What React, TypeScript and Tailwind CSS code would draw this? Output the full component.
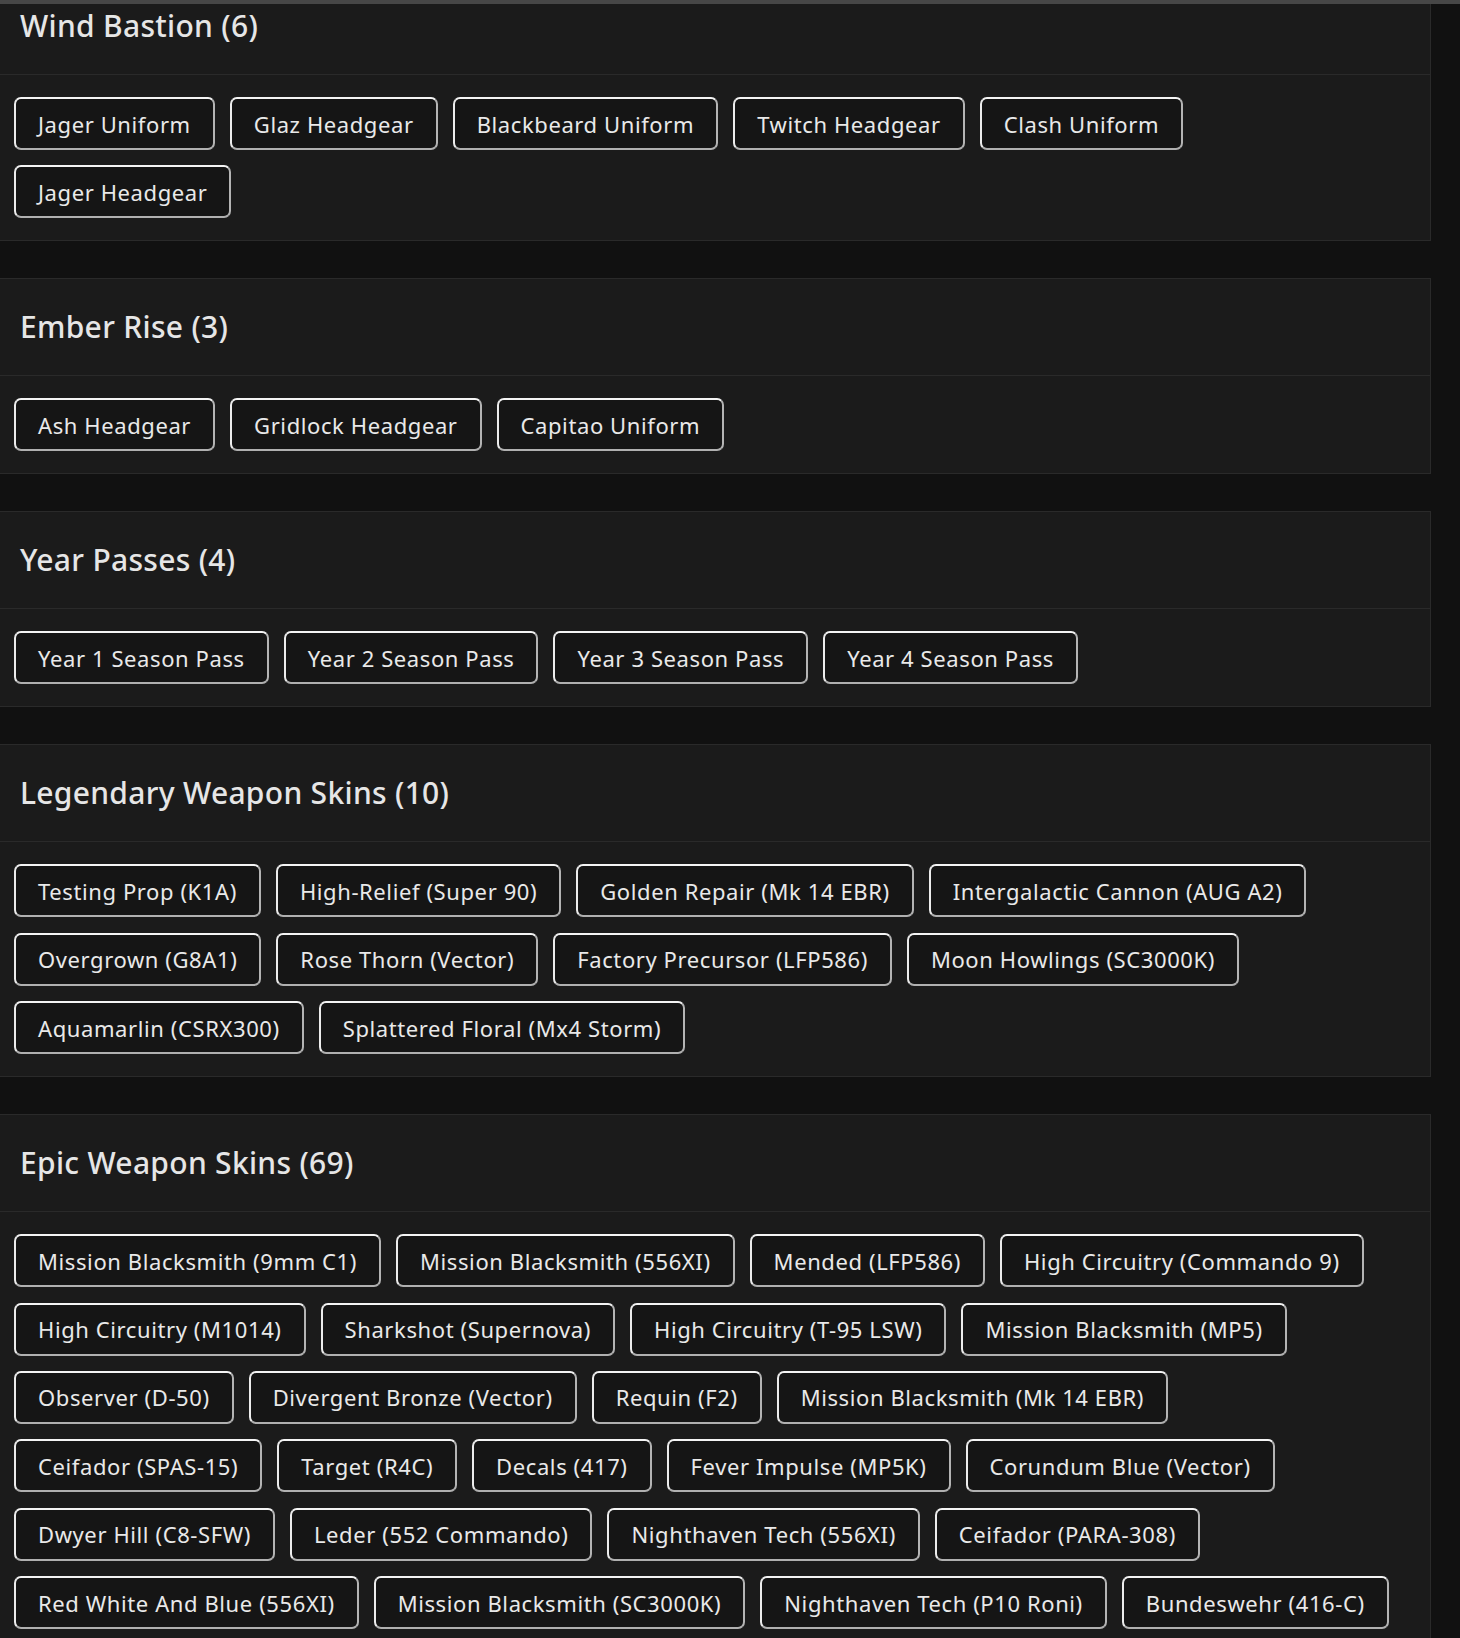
import React from "react";

type Section = { title: string; rows: string[][] };

const sections: Section[] = [
  {
    title: "Wind Bastion (6)",
    rows: [
      ["Jager Uniform", "Glaz Headgear", "Blackbeard Uniform", "Twitch Headgear", "Clash Uniform"],
      ["Jager Headgear"],
    ],
  },
  {
    title: "Ember Rise (3)",
    rows: [["Ash Headgear", "Gridlock Headgear", "Capitao Uniform"]],
  },
  {
    title: "Year Passes (4)",
    rows: [["Year 1 Season Pass", "Year 2 Season Pass", "Year 3 Season Pass", "Year 4 Season Pass"]],
  },
  {
    title: "Legendary Weapon Skins (10)",
    rows: [
      ["Testing Prop (K1A)", "High-Relief (Super 90)", "Golden Repair (Mk 14 EBR)", "Intergalactic Cannon (AUG A2)"],
      ["Overgrown (G8A1)", "Rose Thorn (Vector)", "Factory Precursor (LFP586)", "Moon Howlings (SC3000K)"],
      ["Aquamarlin (CSRX300)", "Splattered Floral (Mx4 Storm)"],
    ],
  },
  {
    title: "Epic Weapon Skins (69)",
    rows: [
      ["Mission Blacksmith (9mm C1)", "Mission Blacksmith (556XI)", "Mended (LFP586)", "High Circuitry (Commando 9)"],
      ["High Circuitry (M1014)", "Sharkshot (Supernova)", "High Circuitry (T-95 LSW)", "Mission Blacksmith (MP5)"],
      ["Observer (D-50)", "Divergent Bronze (Vector)", "Requin (F2)", "Mission Blacksmith (Mk 14 EBR)"],
      ["Ceifador (SPAS-15)", "Target (R4C)", "Decals (417)", "Fever Impulse (MP5K)", "Corundum Blue (Vector)"],
      ["Dwyer Hill (C8-SFW)", "Leder (552 Commando)", "Nighthaven Tech (556XI)", "Ceifador (PARA-308)"],
      ["Red White And Blue (556XI)", "Mission Blacksmith (SC3000K)", "Nighthaven Tech (P10 Roni)", "Bundeswehr (416-C)"],
    ],
  },
];

function ItemButton({ label }: { label: string }) {
  return (
    <button
      type="button"
      className="h-[53px] shrink-0 rounded-[7px] border-2 border-t-[#f4f4f4] border-l-[#ececec] border-r-[#b4b4b4] border-b-[#b0b0b0] bg-[#151515] px-[22px] text-[22px] leading-none tracking-[0.6px] text-[#e9e9e9] whitespace-nowrap"
    >
      {label}
    </button>
  );
}

function Panel({ section, first }: { section: Section; first?: boolean }) {
  return (
    <section
      className={`w-[1431px] shrink-0 border border-l-0 border-[#2a2a2a] bg-[#1b1b1b] ${first ? "-mt-[27px]" : ""}`}
    >
      <div className="flex h-[97px] items-center border-b border-[#2a2a2a] px-5">
        <h2 className="text-[30px] font-medium leading-none tracking-[0.3px] text-[#e6e6e6]">{section.title}</h2>
      </div>
      <div className="flex flex-col gap-[15.4px] px-[14px] py-[22px]">
        {section.rows.map((row, i) => (
          <div key={i} className="flex gap-[15px]">
            {row.map((label) => (
              <ItemButton key={label} label={label} />
            ))}
          </div>
        ))}
      </div>
    </section>
  );
}

export default function App() {
  return (
    <div
      className="h-[1638px] w-[1460px] overflow-hidden bg-[#111111]"
      style={{ fontFamily: '"Noto Sans", "Open Sans", sans-serif' }}
    >
      <div className="relative z-10 h-[4px] bg-[#474747]" />
      <div className="flex flex-col gap-[37px]">
        {sections.map((s, i) => (
          <Panel key={s.title} section={s} first={i === 0} />
        ))}
      </div>
    </div>
  );
}
